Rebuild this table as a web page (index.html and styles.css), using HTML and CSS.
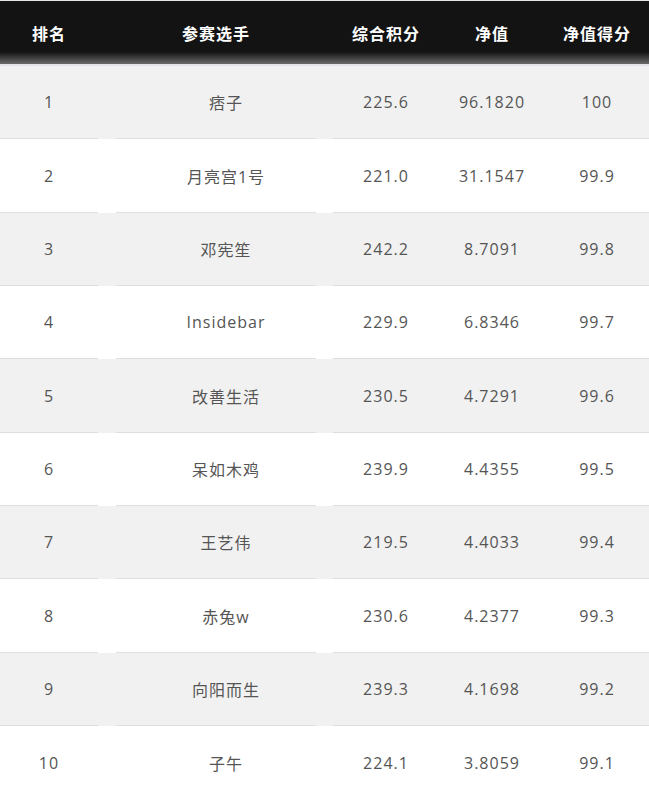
FILE: index.html
```html
<!DOCTYPE html>
<html lang="zh">
<head>
<meta charset="utf-8">
<title>排名</title>
<link rel="stylesheet" href="styles.css">
</head>
<body>
<div class="board">
  <div class="head">
    <div class="c c1">排名</div>
    <div class="c c2">参赛选手</div>
    <div class="c c3">综合积分</div>
    <div class="c c4">净值</div>
    <div class="c c5">净值得分</div>
  </div>
  <div class="row odd"><div class="c c1">1</div><div class="c c2 name">痞子</div><div class="c c3">225.6</div><div class="c c4">96.1820</div><div class="c c5">100</div></div>
  <div class="row"><div class="c c1">2</div><div class="c c2 name">月亮宫1号</div><div class="c c3">221.0</div><div class="c c4">31.1547</div><div class="c c5">99.9</div></div>
  <div class="row odd"><div class="c c1">3</div><div class="c c2 name">邓宪笙</div><div class="c c3">242.2</div><div class="c c4">8.7091</div><div class="c c5">99.8</div></div>
  <div class="row"><div class="c c1">4</div><div class="c c2 name">Insidebar</div><div class="c c3">229.9</div><div class="c c4">6.8346</div><div class="c c5">99.7</div></div>
  <div class="row odd"><div class="c c1">5</div><div class="c c2 name">改善生活</div><div class="c c3">230.5</div><div class="c c4">4.7291</div><div class="c c5">99.6</div></div>
  <div class="row"><div class="c c1">6</div><div class="c c2 name">呆如木鸡</div><div class="c c3">239.9</div><div class="c c4">4.4355</div><div class="c c5">99.5</div></div>
  <div class="row odd"><div class="c c1">7</div><div class="c c2 name">王艺伟</div><div class="c c3">219.5</div><div class="c c4">4.4033</div><div class="c c5">99.4</div></div>
  <div class="row"><div class="c c1">8</div><div class="c c2 name">赤兔w</div><div class="c c3">230.6</div><div class="c c4">4.2377</div><div class="c c5">99.3</div></div>
  <div class="row odd"><div class="c c1">9</div><div class="c c2 name">向阳而生</div><div class="c c3">239.3</div><div class="c c4">4.1698</div><div class="c c5">99.2</div></div>
  <div class="row last"><div class="c c1">10</div><div class="c c2 name">子午</div><div class="c c3">224.1</div><div class="c c4">3.8059</div><div class="c c5">99.1</div></div>
</div>
</body>
</html>
```
FILE: styles.css
```css
html, body {
  margin: 0;
  padding: 0;
  background: #ffffff;
}
body {
  font-family: "Open Sans", "Noto Sans CJK SC", sans-serif;
  font-size: 16px;
  letter-spacing: 1px;
  color: #555555;
}
.board {
  width: 649px;
  display: flex;
  flex-direction: column;
}
.head {
  display: flex;
  height: 63px;
  border-top: 1px solid #e6e6e6;
  border-bottom: 2px solid #e1e3e7;
  background: linear-gradient(to bottom, #131313 0, #131313 51px, #6a6a6a 63px);
  color: #ffffff;
  font-weight: 700;
}
.head .c {
  border-bottom: none;
}
.row {
  display: flex;
  height: 73.35px;
  background: #ffffff;
}
.row.odd {
  background: #f1f1f1;
}
.c {
  display: flex;
  align-items: center;
  justify-content: center;
  box-sizing: border-box;
  border-bottom: 1px solid #dedede;
  white-space: nowrap;
}
.row.last .c {
  border-bottom: none;
}
.c1 {
  width: 98px;
}
.c2 {
  width: 200px;
  margin-left: 18px;
  margin-right: 17px;
}
.c2.name {
  padding-left: 20px;
}
.c3 {
  width: 106px;
}
.c4 {
  width: 106px;
}
.c5 {
  width: 104px;
}
```
